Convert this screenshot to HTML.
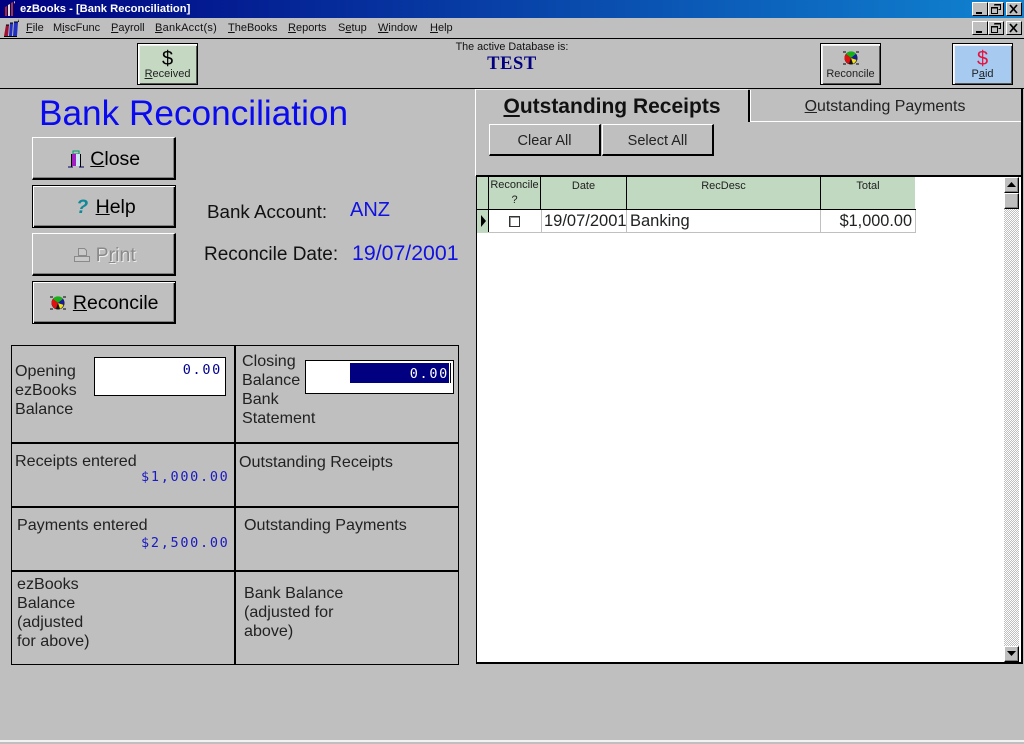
<!DOCTYPE html>
<html><head><meta charset="utf-8">
<style>
html,body{margin:0;padding:0;width:1024px;height:744px;overflow:hidden;background:#bfbfbf;font-family:"Liberation Sans",sans-serif;color:#000}
.a{position:absolute}
.t{position:absolute;white-space:nowrap}
.l{position:absolute;background:#000}
.bt{position:absolute;box-sizing:border-box;background:#bfbfbf;border-top:1px solid #fff;border-left:1px solid #fff;border-right:2px solid #000;border-bottom:2px solid #000}
.big{left:32px;width:144px;height:43px;font-size:19.5px;text-align:center;line-height:42px;box-shadow:inset -1px -1px 0 #808080}
.def{border:1px solid #000;box-shadow:inset 1px 1px 0 #fff,inset -1px -1px 0 #000,inset -2px -2px 0 #808080}
.tb{width:61px;height:42px;top:43px;border:1px solid #000;box-shadow:inset 1px 1px 0 #fff,inset 2px 2px 0 #eee,inset -1px -1px 0 #555;font-size:11px;text-align:center}
.m{font-size:11px;top:21px;line-height:14px;color:#111}
.w{font-size:16.1px;line-height:19px;color:#222;position:absolute;white-space:nowrap}
.mono{font-family:"DejaVu Sans Mono","Liberation Mono",monospace;font-size:13.5px;color:#1a1ac0;letter-spacing:1.7px}
.win{position:absolute;width:16px;height:14px;box-sizing:border-box;background:#bfbfbf;border:1px solid;border-color:#fff #000 #000 #fff}
u{text-decoration:underline}
</style></head><body>

<!-- title bar -->
<div class="a" style="left:0;top:0;width:1024px;height:18px;background:linear-gradient(90deg,#000080,#1084d0)"></div>
<svg class="a" style="left:3px;top:1px" width="14" height="16" viewBox="0 0 14 16"><path d="M2 15V6l2-1v10z" fill="#b22"/><path d="M5 15V4l2-1v12z" fill="#ddd"/><path d="M8 15V2l2-1v14z" fill="#a33"/><path d="M11 1l1-1v3z" fill="#fff"/></svg>
<div class="t" style="left:20px;top:2px;font-size:11.200px;line-height:14px;font-weight:bold;color:#fff">ezBooks - [Bank Reconciliation]</div>
<div class="win" style="left:972px;top:2px"><div class="a" style="left:3px;top:9px;width:6px;height:2px;background:#000"></div></div>
<div class="win" style="left:988px;top:2px"><svg class="a" style="left:2px;top:1px" width="10" height="10"><path d="M3.500 .5h6v5h-2M.5 3.500h6v6h-6z" fill="none" stroke="#000"/><path d="M3 1h7M0 4h7" stroke="#000"/></svg></div>
<div class="win" style="left:1006px;top:2px"><svg class="a" style="left:2px;top:1px" width="10" height="10"><path d="M1 1l7 8M8 1l-7 8" stroke="#000" stroke-width="1.700"/></svg></div>

<!-- menu bar -->
<div class="a" style="left:0;top:18px;width:1024px;height:20px;background:#bfbfbf"></div>
<svg class="a" style="left:3px;top:19px" width="18" height="18" viewBox="0 0 18 18"><path d="M1 17L3 6h3L5 17z" fill="#a01030"/><path d="M6 17L7 4h3L9 17z" fill="#2030c0"/><path d="M10 17l1-14h4l-1 14z" fill="#2030c0"/><path d="M15 3l1-3v3z" fill="#000"/><path d="M1 17.500h13M3 6h3M7 4h3M11 3h4" stroke="#000"/></svg>
<div class="t m" style="left:26px"><u>F</u>ile</div>
<div class="t m" style="left:53px">M<u>i</u>scFunc</div>
<div class="t m" style="left:111px"><u>P</u>ayroll</div>
<div class="t m" style="left:155px;letter-spacing:.25px"><u>B</u>ankAcct(s)</div>
<div class="t m" style="left:228px"><u>T</u>heBooks</div>
<div class="t m" style="left:288px"><u>R</u>eports</div>
<div class="t m" style="left:338px">S<u>e</u>tup</div>
<div class="t m" style="left:378px"><u>W</u>indow</div>
<div class="t m" style="left:430px"><u>H</u>elp</div>
<div class="win" style="left:972px;top:21px"><div class="a" style="left:3px;top:9px;width:6px;height:2px;background:#000"></div></div>
<div class="win" style="left:988px;top:21px"><svg class="a" style="left:2px;top:1px" width="10" height="10"><path d="M3.500 .5h6v5h-2M.5 3.500h6v6h-6z" fill="none" stroke="#000"/><path d="M3 1h7M0 4h7" stroke="#000"/></svg></div>
<div class="win" style="left:1006px;top:21px"><svg class="a" style="left:2px;top:1px" width="10" height="10"><path d="M1 1l7 8M8 1l-7 8" stroke="#000" stroke-width="1.700"/></svg></div>

<!-- toolbar -->
<div class="l" style="left:0;top:38px;width:1024px;height:1px"></div>
<div class="l" style="left:0;top:88px;width:1024px;height:1px"></div>

<div class="bt tb" style="left:137px;background:#c4d8c2">
  <div class="t" style="left:0;width:59px;top:4px;font-size:20px;line-height:22px">$</div>
  <div class="t" style="left:0;width:59px;top:24px;line-height:13px;color:#222"><u>R</u>eceived</div>
</div>
<div class="t" style="left:412px;width:200px;text-align:center;top:41px;font-size:10.800px;line-height:13px;color:#111">The active Database is:</div>
<div class="t" style="left:412px;width:200px;text-align:center;top:53px;font-family:'Liberation Serif',serif;font-weight:bold;font-size:18.500px;line-height:22px;color:#000080;letter-spacing:.6px">TEST</div>
<div class="bt tb" style="left:820px">
  <svg class="a" style="left:21px;top:6px" width="18" height="16" viewBox="0 0 18 16"><path d="M1 2h3M14 2h3M1 14h3M14 14h3" stroke="#000"/><circle cx="9" cy="8" r="6.500" fill="#111"/><path d="M9 8L4 4a6 6 0 0 1 10 0z" fill="#18b018"/><path d="M9 8L4 4a6 6 0 0 0 3 9.700z" fill="#e01010"/><path d="M9 8l2 5.700a6 6 0 0 0 3.500-4z" fill="#f0e020"/><path d="M9 8l5-4a6 6 0 0 1 .5 5.700z" fill="#1818a0"/></svg>
  <div class="t" style="left:0;width:59px;top:24px;line-height:13px;color:#222">Reconcile</div>
</div>
<div class="bt tb" style="left:952px;background:#a6caf0">
  <div class="t" style="left:0;width:59px;top:4px;font-size:20px;line-height:22px;color:#e8103a">$</div>
  <div class="t" style="left:0;width:59px;top:24px;line-height:13px;color:#222">P<u>a</u>id</div>
</div>

<!-- heading -->
<div class="t" style="left:39px;top:93px;font-size:35.200px;line-height:42px;color:#0a0aee">Bank Reconciliation</div>

<!-- buttons -->
<div class="bt big" style="top:137px"><svg style="vertical-align:-3px" width="18" height="18" viewBox="0 0 18 18"><path d="M6 1h6v3H6z" fill="none" stroke="#096"/><path d="M5 4h4v12H5z" fill="#a020c0"/><path d="M9 4h4v12H9z" fill="#cfe8f5"/><path d="M1 17h5M12 17h5" stroke="#006"/><path d="M4.500 4v13M13.500 4v13" stroke="#000"/></svg> <u>C</u>lose</div>
<div class="bt big def" style="top:185px;padding-left:4px"><span style="color:#108898;font-weight:bold;font-style:italic;margin-right:2px">?</span> <u>H</u>elp</div>
<div class="bt big" style="top:233px;padding-left:3px;color:#8a8a8a;text-shadow:1px 1px 0 #eee"><svg style="vertical-align:-1px" width="16" height="14" viewBox="0 0 16 14"><path d="M4.500 .5h6l2 2v5h-8zM.5 8.500h15v5H.5z" fill="#c8c8c8" stroke="#8a8a8a"/></svg> P<u>r</u>int</div>
<div class="bt big def" style="top:281px"><svg style="vertical-align:-2px" width="18" height="16" viewBox="0 0 18 16"><path d="M1 2h3M14 2h3M1 14h3M14 14h3" stroke="#000"/><circle cx="9" cy="8" r="6.500" fill="#111"/><path d="M9 8L4 4a6 6 0 0 1 10 0z" fill="#18b018"/><path d="M9 8L4 4a6 6 0 0 0 3 9.700z" fill="#e01010"/><path d="M9 8l2 5.700a6 6 0 0 0 3.500-4z" fill="#f0e020"/><path d="M9 8l5-4a6 6 0 0 1 .5 5.700z" fill="#1818a0"/></svg> <u>R</u>econcile</div>

<!-- labels -->
<div class="t" style="left:207px;top:201px;font-size:18.800px;line-height:22px;color:#111">Bank Account:</div>
<div class="t" style="left:350px;top:198px;font-size:20px;line-height:24px;color:#1212e0">ANZ</div>
<div class="t" style="left:204px;top:244px;font-size:19px;line-height:22px;color:#111">Reconcile Date:</div>
<div class="t" style="left:352px;top:241px;font-size:21.300px;line-height:24px;color:#1212e0">19/07/2001</div>

<!-- summary grid -->
<div class="l" style="left:11px;top:345px;width:448px;height:1px"></div>
<div class="l" style="left:11px;top:442px;width:448px;height:2px"></div>
<div class="l" style="left:11px;top:506px;width:448px;height:2px"></div>
<div class="l" style="left:11px;top:570px;width:448px;height:2px"></div>
<div class="l" style="left:11px;top:664px;width:448px;height:1px"></div>
<div class="l" style="left:11px;top:345px;width:1px;height:320px"></div>
<div class="l" style="left:234px;top:345px;width:2px;height:320px"></div>
<div class="l" style="left:458px;top:345px;width:1px;height:320px"></div>

<div class="w" style="left:15px;top:362px">Opening<br>ezBooks<br>Balance</div>
<div class="a" style="left:94px;top:357px;width:130px;height:37px;background:#fff;border:1px solid #000"></div>
<div class="t mono" style="left:100px;width:122px;text-align:right;top:362px;line-height:16px;color:#000090">0.00</div>

<div class="w" style="left:242px;top:352px">Closing<br>Balance<br>Bank<br>Statement</div>
<div class="a" style="left:305px;top:360px;width:147px;height:32px;background:#fff;border:1px solid #000"></div>
<div class="a" style="left:350px;top:363px;width:99px;height:20px;background:#000080"></div>
<div class="a" style="left:450px;top:363px;width:1px;height:20px;background:#000"></div>
<div class="t mono" style="left:350px;width:99px;text-align:right;top:366px;line-height:16px;color:#fff">0.00</div>

<div class="w" style="left:15px;top:452px">Receipts entered</div>
<div class="t mono" style="left:100px;width:129.500px;text-align:right;top:469px;line-height:16px">$1,000.00</div>
<div class="w" style="left:239px;top:453px">Outstanding Receipts</div>

<div class="w" style="left:17px;top:516px">Payments entered</div>
<div class="t mono" style="left:100px;width:129.500px;text-align:right;top:535px;line-height:16px">$2,500.00</div>
<div class="w" style="left:244px;top:516px">Outstanding Payments</div>

<div class="w" style="left:17px;top:575px">ezBooks<br>Balance<br>(adjusted<br>for above)</div>
<div class="w" style="left:244px;top:584px">Bank Balance<br>(adjusted for<br>above)</div>

<!-- tabs panel -->
<div class="a" style="left:475px;top:89px;width:1px;height:87px;background:#fff"></div>
<div class="a" style="left:476px;top:89px;width:272px;height:1px;background:#eee"></div>
<div class="a" style="left:748px;top:90px;width:2px;height:32px;background:#000"></div>
<div class="a" style="left:750px;top:90px;width:1px;height:32px;background:#fff"></div>
<div class="a" style="left:750px;top:121px;width:271px;height:1px;background:#fff"></div>
<div class="a" style="left:1021px;top:89px;width:2px;height:90px;background:#000"></div>
<div class="t" style="left:476px;width:272px;text-align:center;top:94px;font-size:21px;line-height:26px;font-weight:bold;color:#111"><u>O</u>utstanding Receipts</div>
<div class="t" style="left:750px;width:270px;text-align:center;top:96px;font-size:15.900px;line-height:22px;color:#222"><u>O</u>utstanding Payments</div>

<div class="bt" style="left:489px;top:124px;width:112px;height:32px;border-width:1px 2px 2px 1px;font-size:14.500px;text-align:center;line-height:32px;color:#222">Clear All</div>
<div class="bt" style="left:602px;top:124px;width:112px;height:32px;border-width:1px 2px 2px 1px;font-size:14.500px;text-align:center;line-height:32px;color:#222">Select All</div>

<!-- grid -->
<div class="a" style="left:476px;top:175px;width:547px;height:489px;box-sizing:border-box;background:#fff;border:2px solid #000;border-left-width:1px"></div>
<div class="a" style="left:477px;top:177px;width:438px;height:33px;background:#c1d8c1"></div>
<div class="a" style="left:477px;top:177px;width:12px;height:56px;background:#c1d8c1"></div>
<div class="l" style="left:477px;top:209px;width:439px;height:1px"></div>
<div class="l" style="left:488px;top:177px;width:1px;height:55px"></div>
<div class="l" style="left:540px;top:177px;width:1px;height:33px"></div>
<div class="l" style="left:626px;top:177px;width:1px;height:33px"></div>
<div class="l" style="left:820px;top:177px;width:1px;height:33px"></div>
<div class="t" style="left:489px;width:51px;text-align:center;top:178px;font-size:11px;line-height:15px;color:#222">Reconcile<br>?</div>
<div class="t" style="left:541px;width:85px;text-align:center;top:179px;font-size:11px;line-height:14px;color:#222">Date</div>
<div class="t" style="left:627px;width:193px;text-align:center;top:179px;font-size:11px;line-height:14px;color:#222">RecDesc</div>
<div class="t" style="left:821px;width:94px;text-align:center;top:179px;font-size:11px;line-height:14px;color:#222">Total</div>

<div class="a" style="left:489px;top:232px;width:427px;height:1px;background:#c0c0c0"></div>
<div class="a" style="left:541px;top:210px;width:1px;height:22px;background:#c0c0c0"></div>
<div class="a" style="left:626px;top:210px;width:1px;height:22px;background:#c0c0c0"></div>
<div class="a" style="left:820px;top:210px;width:1px;height:22px;background:#c0c0c0"></div>
<div class="a" style="left:915px;top:210px;width:1px;height:23px;background:#c0c0c0"></div>
<svg class="a" style="left:480px;top:214px" width="7" height="14"><path d="M1 1l5 6-5 6z" fill="#000"/></svg>
<div class="a" style="left:509px;top:216px;width:9px;height:9px;border:1px solid #333;box-shadow:inset 1px 1px 0 #999"></div>
<div class="t" style="left:544px;top:211px;font-size:16.500px;line-height:20px;color:#222">19/07/2001</div>
<div class="t" style="left:630px;top:211px;font-size:16.500px;line-height:20px;color:#222">Banking</div>
<div class="t" style="left:820px;width:92px;text-align:right;top:211px;font-size:16.300px;line-height:20px;color:#222">$1,000.00</div>

<!-- scrollbar -->
<div class="a" style="left:1004px;top:177px;width:15px;height:485px;background-image:repeating-conic-gradient(#fff 0 25%,#bfbfbf 0 50%);background-size:2px 2px"></div>
<div class="win" style="left:1004px;top:177px;width:15px;height:16px;box-shadow:inset -1px -1px 0 #808080"><svg class="a" style="left:2px;top:4px" width="9" height="6"><path d="M4.500 0L9 5H0z" fill="#000"/></svg></div>
<div class="win" style="left:1004px;top:193px;width:15px;height:16px;box-shadow:inset -1px -1px 0 #808080"></div>
<div class="win" style="left:1004px;top:646px;width:15px;height:16px;box-shadow:inset -1px -1px 0 #808080"><svg class="a" style="left:2px;top:4px" width="9" height="6"><path d="M0 0h9L4.500 5z" fill="#000"/></svg></div>

<!-- bottom -->
<div class="a" style="left:0;top:740px;width:1024px;height:2px;background:#f2f2f2"></div>
</body></html>
